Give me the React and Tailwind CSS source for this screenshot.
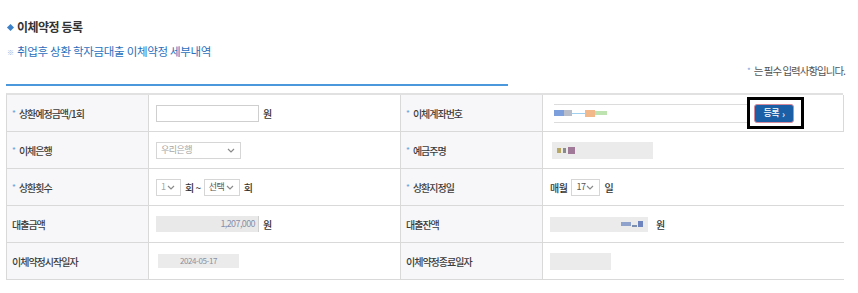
import React from "react";

const FONT = { fontFamily: '"Noto Sans CJK KR", "Noto Sans", sans-serif' };

function Chevron({ className = "" }) {
  return (
    <svg width="8" height="5" viewBox="0 0 8 5" className={className}>
      <path d="M1 1 L4 4 L7 1" fill="none" stroke="#8a8a8a" strokeWidth="1.2" />
    </svg>
  );
}

function Mark() {
  return <span className="text-[8px] leading-none text-[#6fa3dc] mr-[3px] tracking-normal">*</span>;
}

function Label({ req, children }) {
  return (
    <div className="h-[37px] border-b border-r border-[#d9d9d9] bg-[#f7f7f9] flex items-center pl-[5px] text-[10px] font-medium tracking-[-1px] text-[#3c3c3c]">
      {req && <Mark />}
      <span>{children}</span>
    </div>
  );
}

function Cell({ children, last, pl = "pl-[7px]" }) {
  return (
    <div className={`h-[37px] border-b ${last ? "" : "border-r"} border-[#d9d9d9] bg-white flex items-center ${pl} text-[10px] font-medium tracking-[-0.5px] text-[#333]`}>
      {children}
    </div>
  );
}

function Sel({ w, text, gray }) {
  return (
    <div className={`${w} h-[17px] border border-[#d6d6d6] bg-white flex items-center justify-between pl-[4px] pr-[5px] text-[9px] font-normal ${gray ? "text-[#a5a5a5]" : "text-[#555]"}`}>
      <span>{text}</span>
      <Chevron />
    </div>
  );
}

export default function App() {
  return (
    <div style={FONT} className="w-[858px] h-[293px] bg-white px-[6px] pt-[20px] overflow-hidden">
      <div className="flex items-center h-[14px]">
        <div className="w-[5px] h-[5px] rotate-45 bg-[#3b80c8] ml-[2px]" />
        <span className="ml-[4px] text-[12px] font-bold text-[#333] tracking-[-0.5px]">이체약정 등록</span>
      </div>
      <div className="mt-[11px] h-[14px] flex items-center">
        <span className="text-[7px] text-[#8fb7e2] ml-[1px]">※</span>
        <span className="ml-[3px] text-[11.5px] text-[#2a6fbc] tracking-[-0.3px]">취업후 상환 학자금대출 이체약정 세부내역</span>
      </div>
      <div className="flex justify-between items-end h-[27px] w-[839px]">
        <div className="w-[502px] h-[2px] bg-[#4b98dc]" />
        <div className="mb-[7px] flex items-center text-[10.5px] text-[#555] tracking-[-1px]">
          <Mark />
          <span>는 필수 입력사항입니다.</span>
        </div>
      </div>
      <div className="mt-[7px] w-[837px] border-t-2 border-t-[#e1e1e1] border-l border-l-[#d9d9d9] grid grid-cols-[142px_252px_142px_301px]">
        {/* row 1 */}
        <Label req>상환예정금액/1회</Label>
        <Cell>
          <div className="w-[103px] h-[17px] border border-[#cfcfcf] bg-white" />
          <span className="ml-[4px]">원</span>
        </Cell>
        <Label req>이체계좌번호</Label>
        <Cell pl="pl-[11px]">
          <div className="w-[193px] h-[19px] border-y border-[#dcdcdc] flex items-center">
            <div className="w-[10px] h-[6px] bg-[#7d9fdc]" />
            <div className="w-[8px] h-[6px] bg-[#b9bdc9]" />
            <div className="w-[13px] h-[1px] bg-[#9fd0f0]" />
            <div className="w-[10px] h-[7px] bg-[#f3b88a]" />
            <div className="w-[12px] h-[4px] bg-[#bfe3b0]" />
          </div>
          <div className="h-[32px] border-[3px] border-black bg-white flex items-center pl-[4px] pr-[7px]">
            <div className="w-[40px] h-[19px] rounded-[3px] bg-[#1b5fa6] border border-[#d58a9c] flex items-center justify-center text-white text-[9px] tracking-[-0.5px]">
              등록 <span className="ml-[3px] text-[10px] font-normal">›</span>
            </div>
          </div>
        </Cell>
        {/* row 2 */}
        <Label req>이체은행</Label>
        <Cell>
          <Sel w="w-[85px]" text="우리은행" gray />
        </Cell>
        <Label req>예금주명</Label>
        <Cell last pl="pl-[9px]">
          <div className="w-[101px] h-[17px] bg-[#ebebeb] flex items-center pl-[5px] gap-[2px]">
            <div className="w-[4px] h-[5px] bg-[#b8a866]" />
            <div className="w-[3px] h-[5px] bg-[#8a8a8a]" />
            <div className="w-[7px] h-[7px] bg-[#a07898]" />
          </div>
        </Cell>
        {/* row 3 */}
        <Label req>상환횟수</Label>
        <Cell>
          <Sel w="w-[25px]" text="1" gray />
          <span className="ml-[4px]">회 ~</span>
          <div className="ml-[3px]">
            <Sel w="w-[36px]" text="선택" />
          </div>
          <span className="ml-[4px]">회</span>
        </Cell>
        <Label req>상환지정일</Label>
        <Cell last>
          <span>매월</span>
          <div className="ml-[4px]">
            <Sel w="w-[29px]" text="17" />
          </div>
          <span className="ml-[4px]">일</span>
        </Cell>
        {/* row 4 */}
        <Label>대출금액</Label>
        <Cell>
          <div className="w-[103px] h-[16px] bg-[#e9e9e9] border-r border-[#d0d0d0] flex items-center justify-end pr-[3px] text-[9px] font-normal text-[#8a8fa8] tracking-[-0.6px]">
            1,207,000
          </div>
          <span className="ml-[4px]">원</span>
        </Cell>
        <Label>대출잔액</Label>
        <Cell last>
          <div className="w-[98px] h-[15px] bg-[#ebebeb] flex items-center justify-end pr-[5px] gap-[1px]">
            <div className="w-[10px] h-[4px] bg-[#8ea2cc]" />
            <div className="w-[5px] h-[2px] bg-[#7d8fb0] self-end mb-[5px]" />
            <div className="w-[5px] h-[6px] bg-[#6e84bf]" />
          </div>
          <span className="ml-[8px]">원</span>
        </Cell>
        {/* row 5 */}
        <Label>이체약정시작일자</Label>
        <Cell pl="pl-[9px]">
          <div className="w-[81px] h-[14px] bg-[#ebebeb] flex items-center justify-center text-[8px] font-normal text-[#8b8fa0] tracking-[-0.4px]">
            2024-05-17
          </div>
        </Cell>
        <Label>이체약정종료일자</Label>
        <Cell last>
          <div className="w-[61px] h-[17px] bg-[#ebebeb]" />
        </Cell>
      </div>
    </div>
  );
}
